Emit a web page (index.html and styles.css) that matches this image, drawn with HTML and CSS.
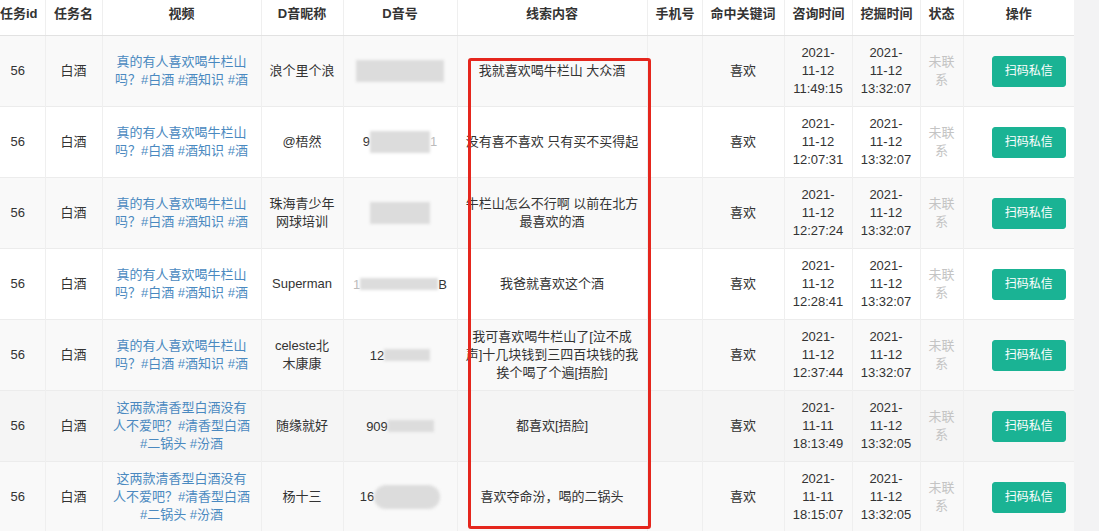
FILE: index.html
```html
<!DOCTYPE html>
<html lang="zh-CN">
<head>
<meta charset="utf-8">
<title>线索列表</title>
<link rel="stylesheet" href="styles.css">
</head>
<body>
<div class="panel">
  <table class="grid">
    <colgroup>
      <col class="w-id"><col class="w-task"><col class="w-video"><col class="w-nick"><col class="w-num">
      <col class="w-clue"><col class="w-phone"><col class="w-kw"><col class="w-time"><col class="w-time">
      <col class="w-state"><col class="w-op">
    </colgroup>
    <thead>
      <tr>
        <th class="c-id">任务id</th><th>任务名</th><th>视频</th><th>D音昵称</th><th>D音号</th>
        <th>线索内容</th><th>手机号</th><th>命中关键词</th><th>咨询时间</th><th>挖掘时间</th><th>状态</th><th>操作</th>
      </tr>
    </thead>
    <tbody>
      <tr class="odd">
        <td class="c-id">56</td><td>白酒</td>
        <td class="c-video"><a href="#">真的有人喜欢喝牛栏山吗？#白酒 #酒知识 #酒</a></td>
        <td>浪个里个浪</td>
        <td class="c-num"><span class="mask m-wide-tall"></span></td>
        <td class="c-clue">我就喜欢喝牛栏山 大众酒</td><td></td><td>喜欢</td>
        <td>2021-<br>11-12<br>11:49:15</td><td>2021-<br>11-12<br>13:32:07</td>
        <td class="c-state">未联系</td><td class="c-op"><button class="btn">扫码私信</button></td>
      </tr>
      <tr>
        <td class="c-id">56</td><td>白酒</td>
        <td class="c-video"><a href="#">真的有人喜欢喝牛栏山吗？#白酒 #酒知识 #酒</a></td>
        <td>@梧然</td>
        <td class="c-num"><span class="part">9</span><span class="mask m-mid-tall"></span><span class="part ghost">1</span></td>
        <td class="c-clue">没有喜不喜欢 只有买不买得起</td><td></td><td>喜欢</td>
        <td>2021-<br>11-12<br>12:07:31</td><td>2021-<br>11-12<br>13:32:07</td>
        <td class="c-state">未联系</td><td class="c-op"><button class="btn">扫码私信</button></td>
      </tr>
      <tr class="odd">
        <td class="c-id">56</td><td>白酒</td>
        <td class="c-video"><a href="#">真的有人喜欢喝牛栏山吗？#白酒 #酒知识 #酒</a></td>
        <td>珠海青少年网球培训</td>
        <td class="c-num"><span class="mask m-mid-tall"></span></td>
        <td class="c-clue">牛栏山怎么不行啊 以前在北方最喜欢的酒</td><td></td><td>喜欢</td>
        <td>2021-<br>11-12<br>12:27:24</td><td>2021-<br>11-12<br>13:32:07</td>
        <td class="c-state">未联系</td><td class="c-op"><button class="btn">扫码私信</button></td>
      </tr>
      <tr>
        <td class="c-id">56</td><td>白酒</td>
        <td class="c-video"><a href="#">真的有人喜欢喝牛栏山吗？#白酒 #酒知识 #酒</a></td>
        <td>Superman</td>
        <td class="c-num"><span class="part ghost">1</span><span class="mask m-long"></span><span class="part">B</span></td>
        <td class="c-clue">我爸就喜欢这个酒</td><td></td><td>喜欢</td>
        <td>2021-<br>11-12<br>12:28:41</td><td>2021-<br>11-12<br>13:32:07</td>
        <td class="c-state">未联系</td><td class="c-op"><button class="btn">扫码私信</button></td>
      </tr>
      <tr class="odd">
        <td class="c-id">56</td><td>白酒</td>
        <td class="c-video"><a href="#">真的有人喜欢喝牛栏山吗？#白酒 #酒知识 #酒</a></td>
        <td>celeste北木康康</td>
        <td class="c-num"><span class="part">12</span><span class="mask m-short"></span></td>
        <td class="c-clue">我可喜欢喝牛栏山了[泣不成声]十几块钱到三四百块钱的我挨个喝了个遍[捂脸]</td><td></td><td>喜欢</td>
        <td>2021-<br>11-12<br>12:37:44</td><td>2021-<br>11-12<br>13:32:07</td>
        <td class="c-state">未联系</td><td class="c-op"><button class="btn">扫码私信</button></td>
      </tr>
      <tr class="hover">
        <td class="c-id">56</td><td>白酒</td>
        <td class="c-video"><a href="#">这两款清香型白酒没有人不爱吧？#清香型白酒 #二锅头 #汾酒</a></td>
        <td>随缘就好</td>
        <td class="c-num"><span class="part">909</span><span class="mask m-short"></span></td>
        <td class="c-clue">都喜欢[捂脸]</td><td></td><td>喜欢</td>
        <td>2021-<br>11-11<br>18:13:49</td><td>2021-<br>11-12<br>13:32:05</td>
        <td class="c-state">未联系</td><td class="c-op"><button class="btn">扫码私信</button></td>
      </tr>
      <tr class="odd">
        <td class="c-id">56</td><td>白酒</td>
        <td class="c-video"><a href="#">这两款清香型白酒没有人不爱吧？#清香型白酒 #二锅头 #汾酒</a></td>
        <td>杨十三</td>
        <td class="c-num"><span class="part">16</span><span class="mask m-round"></span></td>
        <td class="c-clue">喜欢夺命汾，喝的二锅头</td><td></td><td>喜欢</td>
        <td>2021-<br>11-11<br>18:15:07</td><td>2021-<br>11-12<br>13:32:05</td>
        <td class="c-state">未联系</td><td class="c-op"><button class="btn">扫码私信</button></td>
      </tr>
    </tbody>
  </table>
  <div class="highlight"></div>
</div>
</body>
</html>
```

FILE: styles.css
```css
html, body {
  margin: 0;
  padding: 0;
}
body {
  background: #f3f3f4;
  font-family: "Liberation Sans", "Noto Sans CJK SC", sans-serif;
  font-size: 13px;
  line-height: 18px;
  color: #333;
  overflow: hidden;
}
.panel {
  position: relative;
  width: 1074px;
  background: #fff;
}
.grid {
  width: 1074px;
  table-layout: fixed;
  border-collapse: collapse;
}
.w-id { width: 45px; }
.w-task { width: 57px; }
.w-video { width: 159px; }
.w-nick { width: 82px; }
.w-num { width: 114px; }
.w-clue { width: 190px; }
.w-phone { width: 55px; }
.w-kw { width: 82px; }
.w-time { width: 68px; }
.w-state { width: 43px; }
.w-op { width: 111px; }

.grid th,
.grid td {
  padding: 8px;
  text-align: center;
  vertical-align: middle;
  border-left: 1px solid #efefef;
  border-top: 1px solid #ececec;
  overflow: hidden;
}
.grid th:first-child,
.grid td:first-child {
  border-left: none;
}
.grid th {
  padding-top: 5px;
  padding-bottom: 12px;
  font-weight: bold;
  white-space: nowrap;
  border-top: none;
  border-bottom: 1px solid #e2e2e2;
  color: #333;
}
.grid .c-id {
  padding-left: 0;
  padding-right: 9px;
}
.grid tr.odd td {
  background: #f9f9f9;
}
.grid tr.hover td {
  background: #f5f5f5;
}
.grid .c-video {
  padding-left: 10px;
  padding-right: 10px;
}
.c-video a {
  color: #4a89c0;
  text-decoration: none;
}
.c-num {
  white-space: nowrap;
}
.c-state {
  color: #c4c4c4;
}
.grid .c-op {
  padding-left: 28px;
  padding-right: 8px;
}
.btn {
  font-family: inherit;
  font-size: 12px;
  line-height: 17px;
  color: #fff;
  background: #1ab394;
  border: 1px solid #1ab394;
  border-radius: 3px;
  padding: 6px 12px;
  cursor: pointer;
}
.part {
  vertical-align: middle;
}
.part.ghost {
  color: #bbb;
}
.mask {
  display: inline-block;
  vertical-align: middle;
  background: #dcdcdc;
  filter: blur(1.5px);
}
.m-wide-tall { width: 88px; height: 22px; }
.m-mid-tall { width: 60px; height: 22px; }
.m-long { width: 78px; height: 12px; }
.m-short { width: 46px; height: 12px; }
.m-round { width: 66px; height: 24px; border-radius: 12px; }

.highlight {
  position: absolute;
  left: 468px;
  top: 58px;
  width: 177px;
  height: 465px;
  border: 3px solid #e5261d;
  border-radius: 3px;
  pointer-events: none;
}
```
